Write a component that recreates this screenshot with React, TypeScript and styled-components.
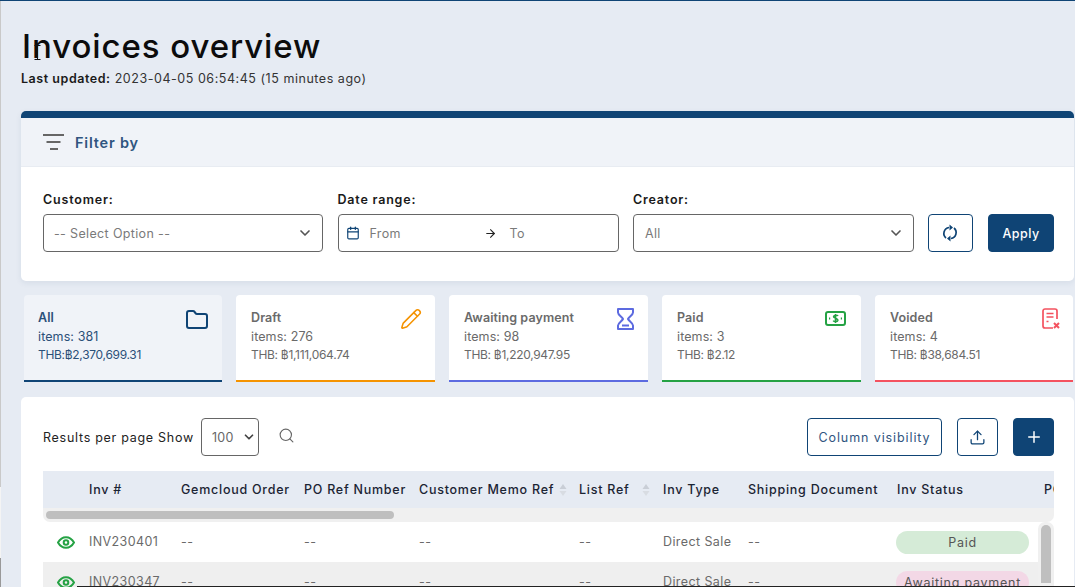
import React from "react";
import styled, { createGlobalStyle } from "styled-components";
import { ArrowRight, Calendar, ChevronDown, Folder, Pencil, Plus, Search, Upload } from "lucide-react";

const NAVY = "#0f4475";
const FONT = `"Inter", "Noto Sans", sans-serif`;

const GlobalStyle = createGlobalStyle`
  html, body { margin: 0; padding: 0; background: #e6ebf3; }
  * { box-sizing: border-box; }
`;

const Page = styled.div`
  position: relative;
  width: 1075px;
  height: 587px;
  overflow: hidden;
  padding: 1px 1px 0 21px;
  background: #e6ebf3;
  border-top: 1px solid ${NAVY};
  font-family: ${FONT};
  font-size: 12.5px;
  color: #666;
  &::before {
    content: "";
    position: absolute;
    left: 0;
    top: 0;
    bottom: 0;
    width: 1px;
    background: linear-gradient(#c9c9c9 0 83%, #f4f4f4 83% 95%, #999 95%);
  }
  &::after {
    content: "";
    position: absolute;
    left: 77px;
    right: 0;
    bottom: 0;
    height: 1px;
    background: #222;
  }
`;

const Title = styled.h1`
  margin: 24px 0 0 1px;
  font-size: 33px;
  line-height: 40px;
  font-weight: 500;
  letter-spacing: 0.92px;
  color: #0c0c0c;
`;

const TextCursor = styled.svg`
  position: absolute;
  left: 34px;
  top: 44px;
`;

const Updated = styled.p`
  margin: 5px 0 0;
  height: 16px;
  font-size: 12.5px;
  line-height: 16px;
  letter-spacing: 0.54px;
  color: #333;
  b { font-weight: 600; color: #1a1a1a; }
`;

const FilterCard = styled.section`
  margin-top: 24px;
  height: 170px;
  background: #fff;
  border-top: 7px solid ${NAVY};
  border-radius: 5px;
  box-shadow: 0 2px 6px rgba(30, 60, 100, 0.08);
  overflow: hidden;
`;

const FilterHead = styled.div`
  display: flex;
  align-items: center;
  gap: 11px;
  height: 49px;
  padding-left: 22px;
  background: #f0f3f8;
  border-bottom: 1px solid #e8ecf2;
  font-size: 14.5px;
  font-weight: 600;
  letter-spacing: 0.8px;
  color: #2f5580;
`;

const FilterRow = styled.div`
  display: grid;
  grid-template-columns: 280px 281px 281px 45px 66px;
  column-gap: 14.5px;
  align-items: end;
  padding: 24px 0 0 22px;
`;

const Field = styled.div`
  display: flex;
  flex-direction: column;
  gap: 6px;
`;

const Label = styled.label`
  height: 17px;
  font-size: 12.5px;
  line-height: 17px;
  font-weight: 600;
  letter-spacing: 0.8px;
  color: #1a1a1a;
`;

const Control = styled.div`
  display: flex;
  align-items: center;
  height: 38px;
  padding: 0 9px 0 11px;
  background: #fff;
  border: 1px solid #666;
  border-radius: 4px;
  font-size: 12.5px;
  letter-spacing: 0.35px;
  color: #7a7a7a;
  svg { flex: none; }
`;

const DateControl = styled(Control)`
  padding-left: 7px;
`;

const ControlText = styled.span`
  flex: 1;
`;

const Placeholder = styled(ControlText)`
  margin-left: -1px;
`;

const DateFrom = styled.span`
  margin-left: 10px;
  width: 114px;
`;

const DateTo = styled.span`
  margin-left: 13px;
`;

const OutlineButton = styled.button`
  display: flex;
  align-items: center;
  justify-content: center;
  height: 38px;
  padding: 0;
  background: #fff;
  border: 1px solid ${NAVY};
  border-radius: 4px;
  font-family: ${FONT};
  font-size: 12.5px;
  letter-spacing: 0.5px;
  color: #2f5580;
`;

const SolidButton = styled(OutlineButton)`
  background: ${NAVY};
  color: #fff;
  font-weight: 500;
`;

const ResetButton = styled(OutlineButton)`
  width: 45px;
  margin-left: -1px;
`;

const StatusRow = styled.div`
  display: grid;
  grid-template-columns: 198px 199px 199px 199px 198px;
  gap: 14px;
  margin-top: 14px;
  padding-left: 3px;
`;

const StatusCard = styled.div<{ $accent: string; $active?: boolean }>`
  position: relative;
  height: 87px;
  padding: 13px 14px 0 ${(p) => (p.$active ? 14 : 15)}px;
  background: ${(p) => (p.$active ? "#f0f3f8" : "#fff")};
  border-bottom: 2px solid ${(p) => p.$accent};
  border-radius: 4px 4px 0 0;
  font-size: 12.5px;
  line-height: 19px;
  letter-spacing: 0.1px;
  color: ${(p) => (p.$active ? "#2b5078" : "#6a6a6a")};
  svg { position: absolute; right: 13px; top: 13px; }
`;

const StatusName = styled.div`
  font-weight: 600;
  letter-spacing: 0.1px;
`;

const StatusAmount = styled.div`
  margin-top: -1px;
  font-size: 12px;
  letter-spacing: -0.3px;
`;

const TableCard = styled.section`
  margin-top: 15px;
  height: 200px;
  padding: 21px 20px 0 22px;
  background: #fff;
  border-radius: 5px 5px 0 0;
`;

const Toolbar = styled.div`
  display: flex;
  align-items: center;
  height: 38px;
`;

const ToolbarLabel = styled.span`
  font-size: 12.5px;
  letter-spacing: 0.72px;
  color: #222;
`;

const PageSize = styled(Control)`
  margin-left: 7px;
  width: 58px;
  padding: 0 2px 0 10px;
  color: #666;
`;

const SearchButton = styled.span`
  display: flex;
  margin: -4px 0 0 19px;
  color: #666;
`;

const ToolbarActions = styled.div`
  display: flex;
  gap: 15px;
  margin-left: auto;
`;

const ColumnButton = styled(OutlineButton)`
  width: 135px;
  letter-spacing: 0.9px;
`;

const IconButton = styled(OutlineButton)`
  width: 41px;
`;

const AddButton = styled(SolidButton)`
  width: 41px;
`;

const columns = "46px 92px 123px 115px 160px 84px 85px 149px 147px 40px";

const HeadRow = styled.div`
  display: grid;
  grid-template-columns: ${columns};
  align-items: center;
  height: 37px;
  margin-top: 15px;
  overflow: hidden;
  background: #e6ebf3;
  font-size: 12.5px;
  font-weight: 500;
  letter-spacing: 0.75px;
  color: #1b2433;
  white-space: nowrap;
`;

const HeadCell = styled.div`
  position: relative;
`;

const SortCarets = styled.svg<{ $left: number }>`
  position: absolute;
  left: ${(p) => p.$left}px;
  top: 50%;
  margin-top: -7px;
`;

const HScroll = styled.div`
  height: 14px;
  padding: 3px;
  background: #f0f0f0;
  border-radius: 0 0 7px 7px;
`;

const HThumb = styled.div`
  width: 348px;
  height: 8px;
  background: #bfbfbf;
  border-radius: 4px;
`;

const TableBody = styled.div`
  display: flex;
`;

const Rows = styled.div`
  flex: 1;
  min-width: 0;
`;

const Row = styled.div<{ $striped?: boolean }>`
  display: grid;
  grid-template-columns: ${columns};
  align-items: center;
  height: 40px;
  padding-bottom: 2px;
  overflow: hidden;
  background: ${(p) => (p.$striped ? "#efefef" : "#fff")};
  font-size: 12.5px;
  letter-spacing: 0.4px;
  color: #6a6a6a;
  white-space: nowrap;
`;

const EyeCell = styled.div`
  display: flex;
  margin-top: 2px;
  padding-left: 14px;
`;

const Pill = styled.div<{ $bg: string }>`
  width: 133px;
  height: 23px;
  margin: 2px 0 0 -1px;
  background: ${(p) => p.$bg};
  border-radius: 12px;
  line-height: 24px;
  text-align: center;
  letter-spacing: 0.75px;
  color: #555;
`;

const VScroll = styled.div`
  flex: none;
  width: 16px;
  height: 64px;
  padding: 3px;
  background: #f0f0f0;
  border-radius: 7px 7px 0 0;
`;

const VThumb = styled.div`
  width: 10px;
  height: 100%;
  background: #bfbfbf;
  border-radius: 5px 5px 0 0;
`;

const FilterIcon = () => (
  <svg width="21" height="16" viewBox="0 0 21 16" fill="none" stroke="#666" strokeWidth="2">
    <path d="M0 1h21M3.500 8h14M7 15h8" />
  </svg>
);

const RefreshIcon = () => (
  <svg width="16" height="18" viewBox="0 0 16 18" fill="none" stroke={NAVY} strokeWidth="1.700">
    <path d="M7 3.500A6 6 0 0 0 4 14M9 14.500A6 6 0 0 0 12 4" />
    <path d="M7.500 0.500v6L11 3.500zM8.500 17.500v-6L5 14.500z" fill={NAVY} stroke="none" />
  </svg>
);

const HourglassIcon = () => (
  <svg width="19" height="22" viewBox="0 0 19 22" fill="none" stroke="#5d6be0" strokeWidth="2">
    <path d="M2 1h15v3.500c0 2.500-4 4.500-5 6.500 1 2 5 4 5 6.500V21H2v-3.500C2 15 6 13 7 11 6 9 2 7 2 4.500z" strokeLinejoin="round" />
    <path d="M6 17.500h7" />
  </svg>
);

const CashIcon = () => (
  <svg width="23" height="18" viewBox="0 -3 23 18" fill="none" stroke="#25a244" strokeWidth="2">
    <rect x="1" y="1" width="19" height="13" rx="2" />
    <path d="M13 5c-.5-1-3.800-1.200-4.300.3C8 7.500 13.300 7 12.800 9.500c-.4 1.500-3.900 1.300-4.600.1M10.500 3v9" strokeWidth="1.600" />
    <path d="M4 7.500h1.200M15.800 7.500h1.200" />
  </svg>
);

const VoidIcon = () => (
  <svg width="18" height="21" viewBox="0 0 18 21" fill="none" stroke="#f4525f" strokeWidth="1.700">
    <path d="M15 11V3a2 2 0 0 0-2-2H3a2 2 0 0 0-2 2v15a2 2 0 0 0 2 2h8" />
    <path d="M4.500 5.500h7M4.500 9h7M4.500 13.500h2" />
    <path d="M12 15l5 5M17 15l-5 5" strokeWidth="2" />
  </svg>
);

const EyeIcon = () => (
  <svg width="18" height="13" viewBox="0 0 18 13" fill="none" stroke="#25a244" strokeWidth="2">
    <path d="M1 6.500C3 3 5.800 1.200 9 1.200S15 3 17 6.500c-2 3.500-4.800 5.300-8 5.300S3 10 1 6.500z" />
    <circle cx="9" cy="6.500" r="2.300" />
  </svg>
);

const Carets = ({ left }: { left: number }) => (
  <SortCarets $left={left} width="8" height="14" viewBox="0 0 8 14">
    <path d="M4 1l3.500 5h-7z" fill="#c9ced6" />
    <path d="M4 13l3.500-5h-7z" fill="#d8dce2" />
  </SortCarets>
);

const STATUSES = [
  { name: "All", items: 381, amount: "THB:฿2,370,699.31", accent: NAVY, active: true, icon: <Folder size={24} color={NAVY} strokeWidth={2} /> },
  { name: "Draft", items: 276, amount: "THB: ฿1,111,064.74", accent: "#f59300", icon: <Pencil size={22} color="#f59300" strokeWidth={1.7} /> },
  { name: "Awaiting payment", items: 98, amount: "THB: ฿1,220,947.95", accent: "#5d6be0", icon: <HourglassIcon /> },
  { name: "Paid", items: 3, amount: "THB: ฿2.12", accent: "#25a244", icon: <CashIcon /> },
  { name: "Voided", items: 4, amount: "THB: ฿38,684.51", accent: "#f4525f", icon: <VoidIcon /> },
];

const App: React.FC = () => {
  return (
    <Page>
      <GlobalStyle />
      <Title>Invoices overview</Title>
      <TextCursor width="7" height="15" viewBox="0 0 7 15" fill="none" stroke="#111">
        <path d="M0.500 0.500h6M3.500 0.500v14M0.500 14.500h6" />
      </TextCursor>
      <Updated>
        <b>Last updated:</b> 2023-04-05 06:54:45 (15 minutes ago)
      </Updated>

      <FilterCard>
        <FilterHead>
          <FilterIcon />
          Filter by
        </FilterHead>
        <FilterRow>
          <Field>
            <Label>Customer:</Label>
            <Control>
              <Placeholder>-- Select Option --</Placeholder>
              <ChevronDown size={16} strokeWidth={2.5} color="#555" />
            </Control>
          </Field>
          <Field>
            <Label>Date range:</Label>
            <DateControl>
              <Calendar size={14} color={NAVY} />
              <DateFrom>From</DateFrom>
              <ArrowRight size={13} color="#222" />
              <DateTo>To</DateTo>
            </DateControl>
          </Field>
          <Field>
            <Label>Creator:</Label>
            <Control>
              <ControlText>All</ControlText>
              <ChevronDown size={16} strokeWidth={2.5} color="#555" />
            </Control>
          </Field>
          <ResetButton aria-label="Reset">
            <RefreshIcon />
          </ResetButton>
          <SolidButton>Apply</SolidButton>
        </FilterRow>
      </FilterCard>

      <StatusRow>
        {STATUSES.map((s) => (
          <StatusCard key={s.name} $accent={s.accent} $active={s.active}>
            <StatusName>{s.name}</StatusName>
            <div>items: {s.items}</div>
            <StatusAmount>{s.amount}</StatusAmount>
            {s.icon}
          </StatusCard>
        ))}
      </StatusRow>

      <TableCard>
        <Toolbar>
          <ToolbarLabel>Results per page Show</ToolbarLabel>
          <PageSize>
            <ControlText>100</ControlText>
            <ChevronDown size={14} strokeWidth={3} color="#444" />
          </PageSize>
          <SearchButton>
            <Search size={17} strokeWidth={1.6} />
          </SearchButton>
          <ToolbarActions>
            <ColumnButton>Column visibility</ColumnButton>
            <IconButton aria-label="Export">
              <Upload size={17} color={NAVY} strokeWidth={1.8} />
            </IconButton>
            <AddButton aria-label="Add">
              <Plus size={18} color="#fff" strokeWidth={2} />
            </AddButton>
          </ToolbarActions>
        </Toolbar>

        <HeadRow>
          <HeadCell />
          <HeadCell>Inv #</HeadCell>
          <HeadCell>Gemcloud Order</HeadCell>
          <HeadCell>PO Ref Number</HeadCell>
          <HeadCell>
            Customer Memo Ref
            <Carets left={140} />
          </HeadCell>
          <HeadCell>
            List Ref
            <Carets left={63} />
          </HeadCell>
          <HeadCell>Inv Type</HeadCell>
          <HeadCell>Shipping Document</HeadCell>
          <HeadCell>Inv Status</HeadCell>
          <HeadCell>PO</HeadCell>
        </HeadRow>
        <HScroll>
          <HThumb />
        </HScroll>
        <TableBody>
          <Rows>
            <Row>
              <EyeCell><EyeIcon /></EyeCell>
              <div>INV230401</div>
              <div>--</div>
              <div>--</div>
              <div>--</div>
              <div>--</div>
              <div>Direct Sale</div>
              <div>--</div>
              <Pill $bg="#d5ebd7">Paid</Pill>
            </Row>
            <Row $striped>
              <EyeCell><EyeIcon /></EyeCell>
              <div>INV230347</div>
              <div>--</div>
              <div>--</div>
              <div>--</div>
              <div>--</div>
              <div>Direct Sale</div>
              <div>--</div>
              <Pill $bg="#f3d8e6">Awaiting payment</Pill>
            </Row>
          </Rows>
          <VScroll>
            <VThumb />
          </VScroll>
        </TableBody>
      </TableCard>
    </Page>
  );
};

export default App;
